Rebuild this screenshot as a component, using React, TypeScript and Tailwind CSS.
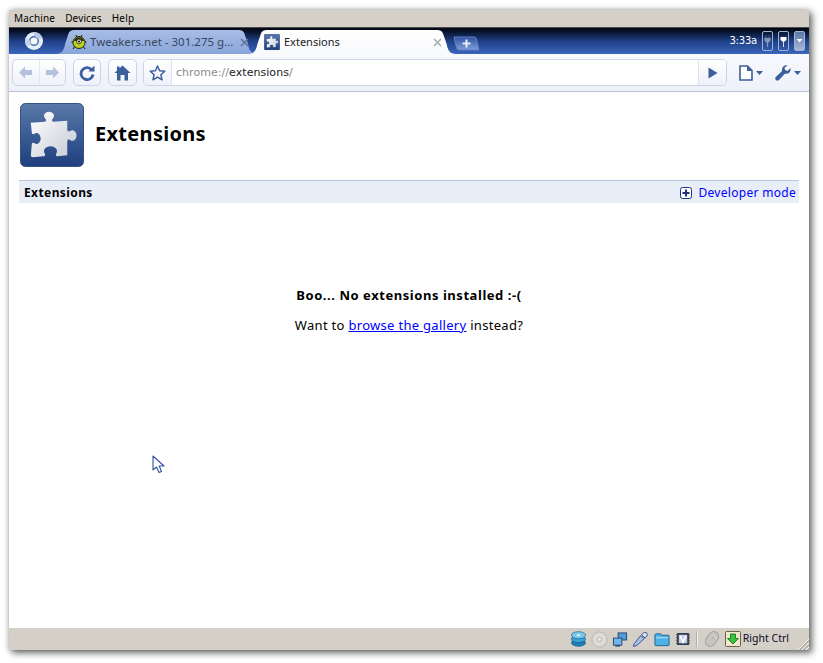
import React from "react";

const PUZZLE = "M11 20 L25 19 C27 19 27 17 25.5 15.5 C23 13 25 9 29.5 9 C34 9 36 13 33.5 15.5 C32 17 32 19 34 19 L48 18 L48 27 C48 29 50 29.5 51 28.5 C53.5 26 57.5 29 57.5 33 C57.5 37 53.5 40 51 37.5 C50 36.5 48 37 48 39 L48 53 L38 54 C36 54 36 52 37 51 C39 48 36 44 31 44 C26 44 23 48 25 51 C26 52 26 54 24 54 L13 55 Q11 55 11 53 L12 42 C12 40 14 40 15 41 C17.5 43 21 40 21 36 C21 32 17.5 29 15 31 C14 32 12 32 12 30 Z";

function Puzzle({ size, id }: { size: number; id: string }) {
  return (
    <svg width={size} height={size} viewBox="0 0 65 65" className="shrink-0 block">
      <defs>
        <linearGradient id={id + "bg"} x1="0" y1="0" x2="0" y2="1">
          <stop offset="0" stopColor="#5a79a8" />
          <stop offset="0.5" stopColor="#3a5c94" />
          <stop offset="1" stopColor="#1f3f7e" />
        </linearGradient>
        <linearGradient id={id + "fg"} x1="0" y1="0" x2="1" y2="1">
          <stop offset="0" stopColor="#ffffff" />
          <stop offset="1" stopColor="#c4cad4" />
        </linearGradient>
      </defs>
      <rect x="0.5" y="0.5" width="64" height="64" rx="5" fill={`url(#${id}bg)`} stroke="#35507f" />
      <path d={PUZZLE} fill={`url(#${id}fg)`} />
    </svg>
  );
}

function Chromium() {
  return (
    <svg width="20" height="20" viewBox="0 0 20 20">
      <circle cx="10" cy="10" r="9" fill="#e8eef8" />
      <circle cx="10" cy="10" r="5" fill="#3f68ae" />
      <circle cx="10" cy="10" r="3.6" fill="#f4f7fc" />
      <path d="M10 1 A9 9 0 0 1 18.5 7 L13 7.5 A4 4 0 0 0 10 5 Z" fill="#b9c9e4" />
      <path d="M2.5 15 A9 9 0 0 1 2 6 L6 10 A4 4 0 0 0 7.5 13.5 Z" fill="#c6d3ea" />
    </svg>
  );
}

function Bug() {
  return (
    <svg width="16" height="16" viewBox="0 0 16 16">
      <path d="M2 15 L4 12 M14 15 L12 12 M0.5 8 H3 M15.5 8 H13 M5 1 L6 4 M11 1 L10 4" stroke="#111" strokeWidth="1" />
      <circle cx="8" cy="8.5" r="6" fill="#b8d81e" stroke="#1f2a0a" />
      <path d="M3 7 A5.2 5.2 0 0 1 13 7 Z" fill="#2a2f1a" />
      <circle cx="8" cy="7.5" r="2.4" fill="#f4f4d0" stroke="#111" strokeWidth="0.8" />
      <circle cx="8" cy="7.5" r="1.1" fill="#111" />
      <path d="M6.5 11.5 L8 13 L9.5 11.5 Z" fill="#e8a020" />
    </svg>
  );
}

function TabShape({ fill, id }: { fill: string[]; id: string }) {
  return (
    <svg className="absolute inset-0 w-full h-full" viewBox="0 0 200 24" preserveAspectRatio="none">
      <defs>
        <linearGradient id={id} x1="0" y1="0" x2="0" y2="1">
          <stop offset="0" stopColor={fill[0]} />
          <stop offset="1" stopColor={fill[1]} />
        </linearGradient>
      </defs>
      <path d="M0 24 C6 24 8 20 9 14 L12 5 C13 1 15 0 19 0 H181 C185 0 187 1 188 5 L191 14 C192 20 194 24 200 24 Z" fill={`url(#${id})`} />
    </svg>
  );
}

function Close({ color }: { color: string }) {
  return (
    <svg width="9" height="9" viewBox="0 0 9 9" className="shrink-0">
      <path d="M1 1 L8 8 M8 1 L1 8" stroke={color} strokeWidth="1.6" />
    </svg>
  );
}

function TrayBox({ children, fill }: { children: React.ReactNode; fill?: boolean }) {
  return (
    <div className={`w-[11px] h-[20px] rounded-[2px] border border-[#9fb4d6] flex flex-col items-center justify-center ${fill ? "bg-gradient-to-b from-[#5a76a8] to-[#a9b9d6]" : ""}`}>
      {children}
    </div>
  );
}

const btn = "h-[27px] rounded-[5px] border border-[#ccd3e6] bg-gradient-to-b from-white to-[#eef1f9] flex items-center justify-center";

function StatusIcons() {
  return (
    <div className="flex items-center">
      <svg width="17" height="18" viewBox="0 0 18 18">
        <ellipse cx="9" cy="13" rx="7.5" ry="3.8" fill="#1f7fb4" stroke="#0f4f7a" strokeWidth="0.6" />
        <ellipse cx="9" cy="9" rx="7.5" ry="3.8" fill="#3ea2d4" stroke="#0f4f7a" strokeWidth="0.6" />
        <ellipse cx="9" cy="5" rx="7.5" ry="3.8" fill="#78c8ea" stroke="#0f4f7a" strokeWidth="0.6" />
        <ellipse cx="9" cy="5" rx="2" ry="1" fill="#dff2fb" />
      </svg>
      <svg width="17" height="17" viewBox="0 0 18 18" className="ml-[4px]">
        <circle cx="9" cy="9" r="8" fill="#dcdad4" stroke="#b4b2ac" />
        <circle cx="9" cy="9" r="2.2" fill="#f0eee8" stroke="#b0aea8" />
      </svg>
      <svg width="16" height="17" viewBox="0 0 17 17" className="ml-[4px]">
        <rect x="6.5" y="1.5" width="9" height="7.5" fill="#4f9ad8" stroke="#27476f" />
        <rect x="1.5" y="7" width="9" height="7.5" fill="#6fb6ea" stroke="#27476f" />
        <rect x="3.5" y="14.5" width="5" height="1.5" fill="#27476f" />
      </svg>
      <svg width="17" height="17" viewBox="0 0 18 18" className="ml-[4px]">
        <path d="M3 16 L1.5 16.5 L2 14 L9 5 L13 8 L5.5 15 Z" fill="#a9bfe6" stroke="#33518e" strokeWidth="1" />
        <path d="M10 4 L13 1.5 Q16 1 16.5 4 L14 7.5 Z" fill="#dfe6f0" stroke="#33518e" strokeWidth="1" />
      </svg>
      <svg width="16" height="15" viewBox="0 0 17 15" className="ml-[5px]">
        <path d="M1 3 Q1 1.5 2.5 1.5 H7 L8.5 3 H15 Q16 3 16 4 V13 Q16 14 15 14 H2 Q1 14 1 13 Z" fill="#4fb2e6" stroke="#1d5c8d" />
        <rect x="2" y="5" width="13" height="1.2" fill="#a8def7" />
      </svg>
      <svg width="16" height="16" viewBox="0 0 17 17" className="ml-[5px]">
        <rect x="2" y="2" width="13" height="13" rx="1" fill="#2d3a52" />
        <path d="M1 4 H3 M1 7 H3 M1 10 H3 M1 13 H3 M14 4 H16 M14 7 H16 M14 10 H16 M14 13 H16" stroke="#555" />
        <rect x="4" y="4" width="9" height="9" fill="#c5cfe8" />
        <path d="M5.5 5 L8.5 12 L11.5 5" stroke="#fff" strokeWidth="1.6" fill="none" />
      </svg>
      <div className="w-[2px] h-[16px] bg-[#f4f2ec] border-l border-[#b0ada5] ml-[5px]" />
      <svg width="18" height="18" viewBox="0 0 18 18" className="ml-[5px]">
        <rect x="4" y="1" width="10" height="16" rx="5" transform="rotate(35 9 9)" fill="#c6c4be" stroke="#a5a39d" />
        <path d="M9.5 5 L13.5 8" stroke="#e8e6e0" strokeWidth="1" />
        <path d="M11 6 L9.5 8.5" stroke="#a5a39d" strokeWidth="1" />
      </svg>
      <svg width="16" height="16" viewBox="0 0 16 16" className="ml-[4px]">
        <rect x="0.5" y="0.5" width="15" height="15" rx="1" fill="#efe7cd" stroke="#6a6242" />
        <path d="M5.5 3 H10.5 V7.5 H13.5 L8 13 L2.5 7.5 H5.5 Z" fill="#36c23a" stroke="#156b18" strokeWidth="0.8" />
      </svg>
    </div>
  );
}

export default function App() {
  return (
    <div className="w-[823px] h-[663px] bg-white pl-[9px] pt-[10px] overflow-hidden" style={{ fontFamily: '"Noto Sans", sans-serif' }}>
      <div className="w-[800px] h-[640px] flex flex-col shadow-[3px_3px_7px_rgba(0,0,0,0.55),0_0_6px_rgba(0,0,0,0.25)] bg-white">
        {/* VM menu */}
        <div className="h-[17px] bg-[#d4d0c8] flex items-center gap-[10px] pl-[5px] text-[10px] tracking-[0.15px] text-black shrink-0">
          <span>Machine</span>
          <span>Devices</span>
          <span>Help</span>
        </div>
        <div className="h-px bg-[#4a4a4a] shrink-0" />
        {/* tab strip */}
        <div className="h-[26px] shrink-0 bg-gradient-to-b from-[#020610] via-[#1f3f86] to-[#3a66bd] flex items-end relative">
          <div className="w-[46px] h-full flex items-center justify-center pl-[3px] pb-[1px] shrink-0 mr-[1px]">
            <Chromium />
          </div>
          <div className="relative w-[201px] h-[24px] shrink-0 flex items-center pl-[15px] pr-[8px] text-[#37465e]">
            <TabShape fill={["#a8bde6", "#89a5da"]} id="t1" />
            <span className="relative"><Bug /></span>
            <span className="relative ml-[3px] flex-1 whitespace-nowrap text-[11.5px]">Tweakers.net - 301.275 g...</span>
            <span className="relative"><Close color="#5f7298" /></span>
          </div>
          <div className="relative w-[208px] h-[24px] -ml-[9px] shrink-0 flex items-center pl-[16px] pr-[14px] text-[#222]">
            <TabShape fill={["#ffffff", "#f8f9fd"]} id="t2" />
            <span className="relative"><Puzzle size={16} id="fav" /></span>
            <span className="relative ml-[4px] flex-1 whitespace-nowrap text-[11px]">Extensions</span>
            <span className="relative"><Close color="#a8acb4" /></span>
          </div>
          <svg width="27" height="15" viewBox="0 0 27 15" className="-ml-[3px] mb-[3px] shrink-0">
            <defs>
              <linearGradient id="nt" x1="0" y1="0" x2="0" y2="1">
                <stop offset="0" stopColor="#2f52a0" />
                <stop offset="1" stopColor="#7fa0dc" />
              </linearGradient>
            </defs>
            <path d="M1 1 H21 Q23 1 23.5 3 L26 14 H6 Q4 14 3.5 12 Z" fill="url(#nt)" stroke="#5d7fc4" strokeWidth="1" />
            <path d="M13.5 3.5 V11.5 M9.5 7.5 H17.5" stroke="#e8eefa" strokeWidth="2" />
          </svg>
          <div className="ml-auto flex items-center gap-[5px] h-full pr-[4px] pb-[1px]">
            <span className="text-[10px] text-white tracking-[-0.2px]" style={{ fontFamily: '"DejaVu Sans", sans-serif' }}>3:33a</span>
            <TrayBox>
              <svg width="7" height="12" viewBox="0 0 7 12"><path d="M2 0 V3 M5 0 V3 M0.5 3 H6.5 V5.5 L4 8 V12 H3 V8 L0.5 5.5 Z" fill="#8296bc" stroke="#8296bc" strokeWidth="0.4" /></svg>
            </TrayBox>
            <TrayBox>
              <svg width="7" height="12" viewBox="0 0 7 12"><path d="M0.5 2 H6.5 V5 L4 7 H3 L0.5 5 Z" fill="#fff" /><path d="M3.5 6 V12" stroke="#d8e0f0" /></svg>
            </TrayBox>
            <TrayBox fill>
              <svg width="7" height="6" viewBox="0 0 7 6"><path d="M0.5 1 H6.5 L3.5 4.5 Z" fill="#fff" /></svg>
            </TrayBox>
          </div>
        </div>
        {/* toolbar */}
        <div className="h-[38px] shrink-0 bg-gradient-to-b from-[#f8f9fd] to-[#eef1f9] border-b border-[#b6c0d6] flex items-center pl-[3px] pr-[7px]">
          <div className={`${btn} w-[54px]`}>
            <div className="flex-1 flex items-center justify-center h-full border-r border-[#e2e6f1]">
              <svg width="15" height="13" viewBox="0 0 15 13"><path d="M7 0.5 L1 6.5 L7 12.5 V9 H14 V4 H7 Z" fill="#b4c2dd" /></svg>
            </div>
            <div className="flex-1 flex items-center justify-center h-full">
              <svg width="15" height="13" viewBox="0 0 15 13"><path d="M8 0.5 L14 6.5 L8 12.5 V9 H1 V4 H8 Z" fill="#b4c2dd" /></svg>
            </div>
          </div>
          <div className={`${btn} w-[28px] ml-[7px]`}>
            <svg width="16" height="16" viewBox="0 0 16 16"><path d="M13 5.2 A6 6 0 1 0 14 9.5" fill="none" stroke="#3a5f9c" strokeWidth="2.8" /><path d="M9.5 6.5 H15.5 V0.5 Z" fill="#3a5f9c" /></svg>
          </div>
          <div className={`${btn} w-[29px] ml-[7px]`}>
            <svg width="17" height="16" viewBox="0 0 17 16"><path d="M8.5 0.5 L16.5 8 H14 V15.5 H10.5 V10 H6.5 V15.5 H3 V8 H0.5 L3 5.6 V1.5 H5.5 V3.3 Z" fill="#3a5f9c" /></svg>
          </div>
          <div className="h-[27px] ml-[6px] w-[584px] shrink-0 rounded-[5px] border border-[#ccd3e6] flex bg-white overflow-hidden">
            <div className="w-[28px] shrink-0 h-full border-r border-[#dfe3ee] bg-gradient-to-b from-white to-[#eef1f9] flex items-center justify-center">
              <svg width="17" height="16" viewBox="0 0 17 16"><path d="M8.5 1 L10.6 5.8 L15.8 6.3 L11.9 9.7 L13 14.8 L8.5 12.2 L4 14.8 L5.1 9.7 L1.2 6.3 L6.4 5.8 Z" fill="none" stroke="#3a5f9c" strokeWidth="1.5" strokeLinejoin="round" /></svg>
            </div>
            <div className="flex-1 flex items-center pl-[4px] pt-[2px] text-[11px] tracking-[0.05px]" style={{ fontFamily: '"DejaVu Sans", sans-serif' }}>
              <span className="text-[#8a8a8a]">chrome://</span>
              <span className="text-[#222]">extensions</span>
              <span className="text-[#8a8a8a]">/</span>
            </div>
            <div className="w-[28px] shrink-0 h-full border-l border-[#dfe3ee] bg-gradient-to-b from-white to-[#eef1f9] flex items-center justify-center">
              <svg width="10" height="12" viewBox="0 0 10 12"><path d="M0.5 0.5 L9.5 6 L0.5 11.5 Z" fill="#3a5f9c" /></svg>
            </div>
          </div>
          <div className="flex items-center ml-[12px]">
            <svg width="14" height="16" viewBox="0 0 14 16"><path d="M1 1 H8.5 L13 5.5 V15 H1 Z" fill="#fff" stroke="#3a5f9c" strokeWidth="1.6" /><path d="M8 1 V6 H13 Z" fill="#3a5f9c" /></svg>
            <svg width="7" height="4" viewBox="0 0 7 4" className="ml-[3px]"><path d="M0 0 H7 L3.5 4 Z" fill="#3a5f9c" /></svg>
          </div>
          <div className="flex items-center ml-[12px]">
            <svg width="16" height="16" viewBox="0 0 16 16"><path d="M15.5 3 L12.5 6 L10 5 L9.5 2.7 L12.5 0.4 C9.8 -0.2 6.8 1.5 7 5 C7 5.8 7 6 6.6 6.5 L0.8 12 C-0.2 13.2 0.3 14.3 1 15 C1.8 15.8 3 16 4 15 L9.6 9 C10 8.7 10.5 8.8 11 8.8 C14 9 16.2 6.3 15.5 3 Z" fill="#3a5f9c" /></svg>
            <svg width="7" height="4" viewBox="0 0 7 4" className="ml-[3px]"><path d="M0 0 H7 L3.5 4 Z" fill="#3a5f9c" /></svg>
          </div>
        </div>
        {/* content */}
        <div className="flex-1 min-h-0 bg-white px-[10px] pt-[11px] relative">
          <div className="flex items-center h-[64px] pl-[1px]">
            <Puzzle size={64} id="hero" />
            <h1 className="ml-[11px] text-[20px] font-bold text-black leading-none tracking-[0.3px] -mt-[3px]">Extensions</h1>
          </div>
          <div className="mt-[13px] h-[23px] bg-[#e8eef8] border-t border-[#b5c7de] flex items-center justify-between pl-[5px] pr-[3px] pt-[1px]">
            <span className="text-[12px] font-bold text-black tracking-[0.4px]">Extensions</span>
            <span className="flex items-center gap-[6px] text-[12px] text-[#0000ff] tracking-[0.3px]">
              <svg width="12" height="12" viewBox="0 0 12 12"><rect x="0.5" y="0.5" width="11" height="11" rx="2" fill="#fff" stroke="#20307c" /><path d="M6 2.5 V9.5 M2.5 6 H9.5" stroke="#20307c" strokeWidth="2" /></svg>
              Developer mode
            </span>
          </div>
          <div className="mt-[84px] text-center">
            <div className="text-[13px] font-bold text-black leading-[16px] tracking-[0.55px]">Boo... No extensions installed :-(</div>
            <div className="text-[13px] text-black leading-[16px] mt-[14px] tracking-[0.3px]">
              Want to <a className="text-[#0000ff] underline" href="#gallery">browse the gallery</a> instead?
            </div>
          </div>
          <svg width="13" height="19" viewBox="0 0 13 19" className="absolute left-[143px] top-[363px]">
            <path d="M1 1 V15 L4.5 12 L7 17.5 L9.5 16.5 L7.2 11 L12 11 Z" fill="#fff" stroke="#2f52a4" strokeWidth="1.1" strokeLinejoin="round" />
          </svg>
        </div>
        {/* status */}
        <div className="h-[22px] shrink-0 bg-[#d4d0c8] flex items-center justify-end pr-[20px] text-[10.5px] relative">
          <StatusIcons />
          <span className="ml-[2px] text-[#0a0a28]">Right Ctrl</span>
          <svg width="12" height="12" viewBox="0 0 12 12" className="absolute right-0 bottom-0">
            <path d="M12 1 L1 12 M12 5 L5 12 M12 9 L9 12" stroke="#f6f4ee" strokeWidth="1" />
            <path d="M12 2.5 L2.5 12 M12 6.5 L6.5 12 M12 10.5 L10.5 12" stroke="#8f8c84" strokeWidth="1" />
          </svg>
        </div>
      </div>
    </div>
  );
}
